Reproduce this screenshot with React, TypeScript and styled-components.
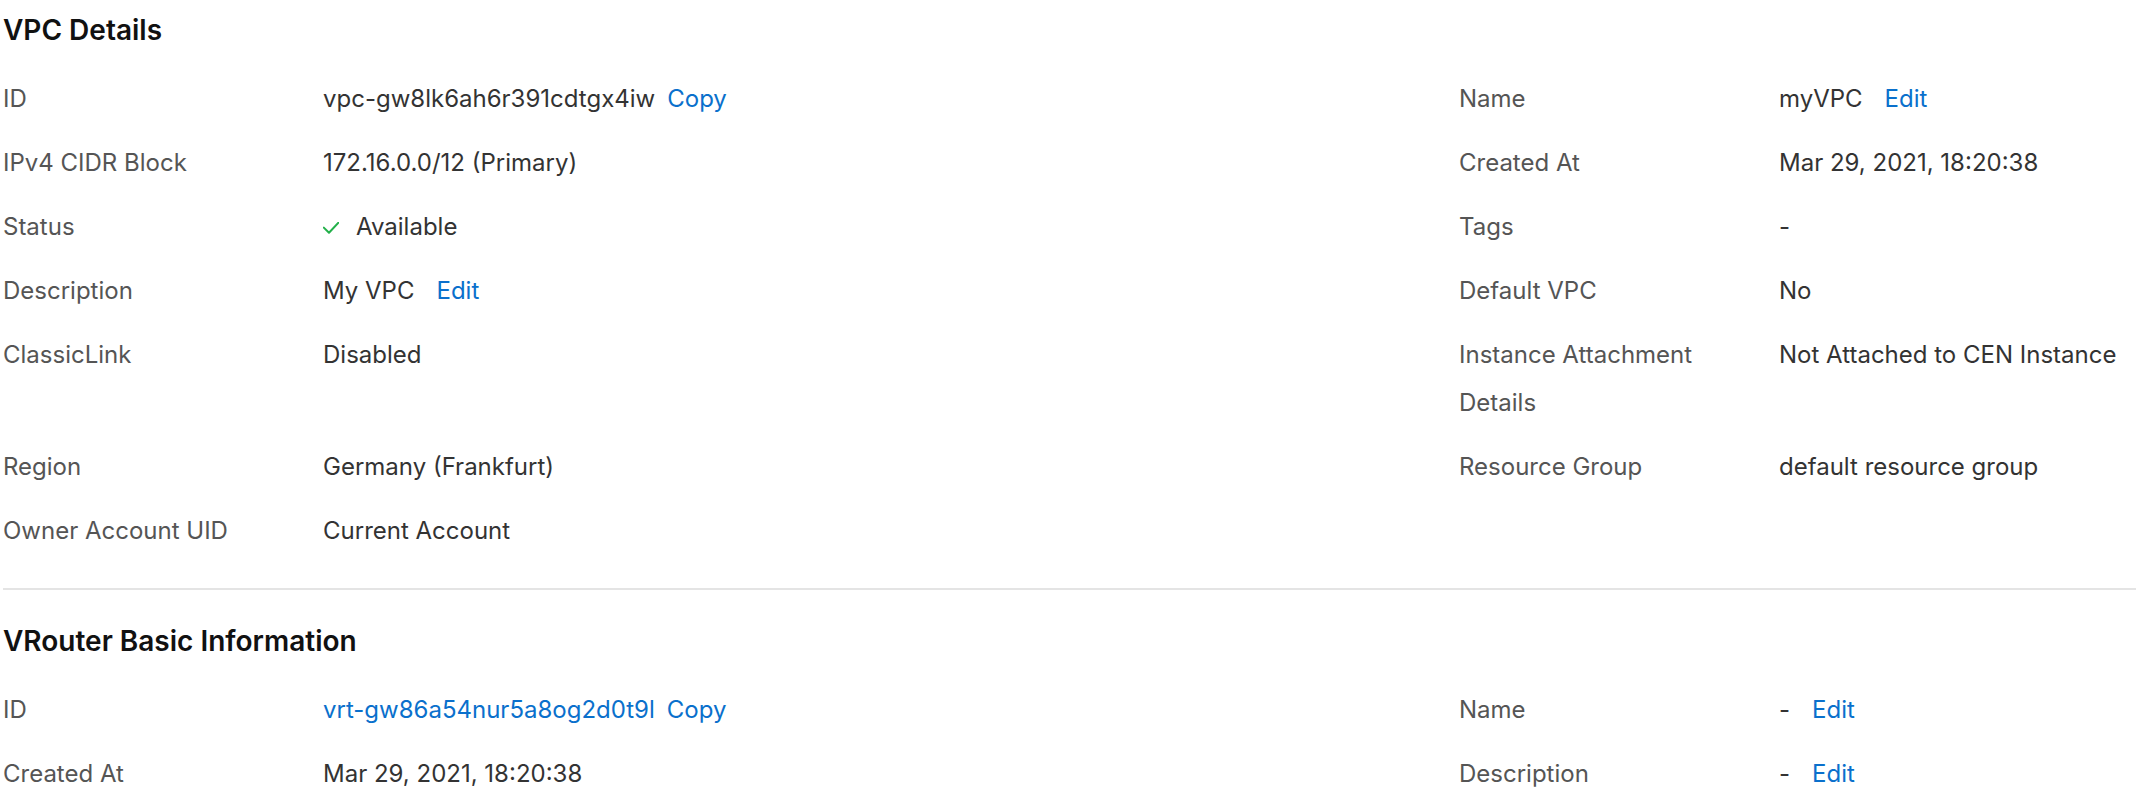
import React from "react";
import styled, { createGlobalStyle } from "styled-components";

const GlobalStyle = createGlobalStyle`
  html, body {
    margin: 0;
    padding: 0;
    background: #ffffff;
  }
  body {
    font-family: Inter, "Noto Sans", "Liberation Sans", sans-serif;
    -webkit-font-smoothing: antialiased;
  }
`;

const Page = styled.div`
  padding: 0 0 0 3px;
  overflow: hidden;
`;

const Section = styled.section`
  display: flex;
  flex-direction: column;
`;

const Title = styled.h2<{ $top: number }>`
  margin: ${(p) => p.$top}px 0 17px;
  font-size: 28px;
  line-height: 40px;
  font-weight: 600;
  color: #111111;
`;

const Row = styled.div`
  display: grid;
  grid-template-columns: 1456px 1fr;
  padding: 8px 0;
`;

const Field = styled.div`
  display: grid;
  grid-template-columns: 320px 1fr;
  font-size: 24px;
  line-height: 48px;
`;

const Label = styled.div`
  color: #555555;
  padding-right: 30px;
`;

const Value = styled.div<{ $link?: boolean }>`
  display: flex;
  align-items: center;
  height: fit-content;
  color: ${(p) => (p.$link ? "#0a70cc" : "#333333")};
  white-space: nowrap;
`;

const Action = styled.a<{ $gap: number }>`
  margin-left: ${(p) => p.$gap}px;
  color: #0a70cc;
  text-decoration: none;
  cursor: pointer;
`;

const CheckIcon = styled.svg`
  width: 16px;
  height: 12px;
  margin: 2px 17px 0 0;
  flex: none;
`;

const Divider = styled.hr`
  border: none;
  height: 2px;
  margin: 25px 0 31px;
  background: #e4e4e4;
`;

type Item = {
  label: string;
  value: React.ReactNode;
  link?: boolean;
  action?: "Copy" | "Edit";
};

const Check = () => (
  <CheckIcon viewBox="0 0 16 12" fill="none">
    <path
      d="M0.8 5.6 L6 10.8 L15.4 0.8"
      stroke="#23b04a"
      strokeWidth="2"
      strokeLinecap="round"
      strokeLinejoin="round"
    />
  </CheckIcon>
);

const FieldView = ({ item }: { item?: Item }) => {
  if (!item) return <Field />;
  return (
    <Field>
      <Label>{item.label}</Label>
      <Value $link={item.link}>
        {item.value}
        {item.action && (
          <Action $gap={item.action === "Copy" ? 12 : 22}>{item.action}</Action>
        )}
      </Value>
    </Field>
  );
};

const vpcRows: [Item, Item?][] = [
  [
    { label: "ID", value: "vpc-gw8lk6ah6r391cdtgx4iw", action: "Copy" },
    { label: "Name", value: "myVPC", action: "Edit" },
  ],
  [
    { label: "IPv4 CIDR Block", value: "172.16.0.0/12 (Primary)" },
    { label: "Created At", value: "Mar 29, 2021, 18:20:38" },
  ],
  [
    {
      label: "Status",
      value: (
        <>
          <Check />
          Available
        </>
      ),
    },
    { label: "Tags", value: "-" },
  ],
  [
    { label: "Description", value: "My VPC", action: "Edit" },
    { label: "Default VPC", value: "No" },
  ],
  [
    { label: "ClassicLink", value: "Disabled" },
    {
      label: "Instance Attachment Details",
      value: "Not Attached to CEN Instance",
    },
  ],
  [
    { label: "Region", value: "Germany (Frankfurt)" },
    { label: "Resource Group", value: "default resource group" },
  ],
  [{ label: "Owner Account UID", value: "Current Account" }],
];

const vrouterRows: [Item, Item?][] = [
  [
    { label: "ID", value: "vrt-gw86a54nur5a8og2d0t9l", link: true, action: "Copy" },
    { label: "Name", value: "-", action: "Edit" },
  ],
  [
    { label: "Created At", value: "Mar 29, 2021, 18:20:38" },
    { label: "Description", value: "-", action: "Edit" },
  ],
];

const DetailSection = ({
  title,
  rows,
  top,
}: {
  title: string;
  rows: [Item, Item?][];
  top: number;
}) => (
  <Section>
    <Title $top={top}>{title}</Title>
    {rows.map(([left, right], i) => (
      <Row key={i}>
        <FieldView item={left} />
        <FieldView item={right} />
      </Row>
    ))}
  </Section>
);

export default function App() {
  return (
    <>
      <GlobalStyle />
      <Page>
        <DetailSection title="VPC Details" rows={vpcRows} top={10} />
        <Divider />
        <DetailSection title="VRouter Basic Information" rows={vrouterRows} top={0} />
      </Page>
    </>
  );
}
